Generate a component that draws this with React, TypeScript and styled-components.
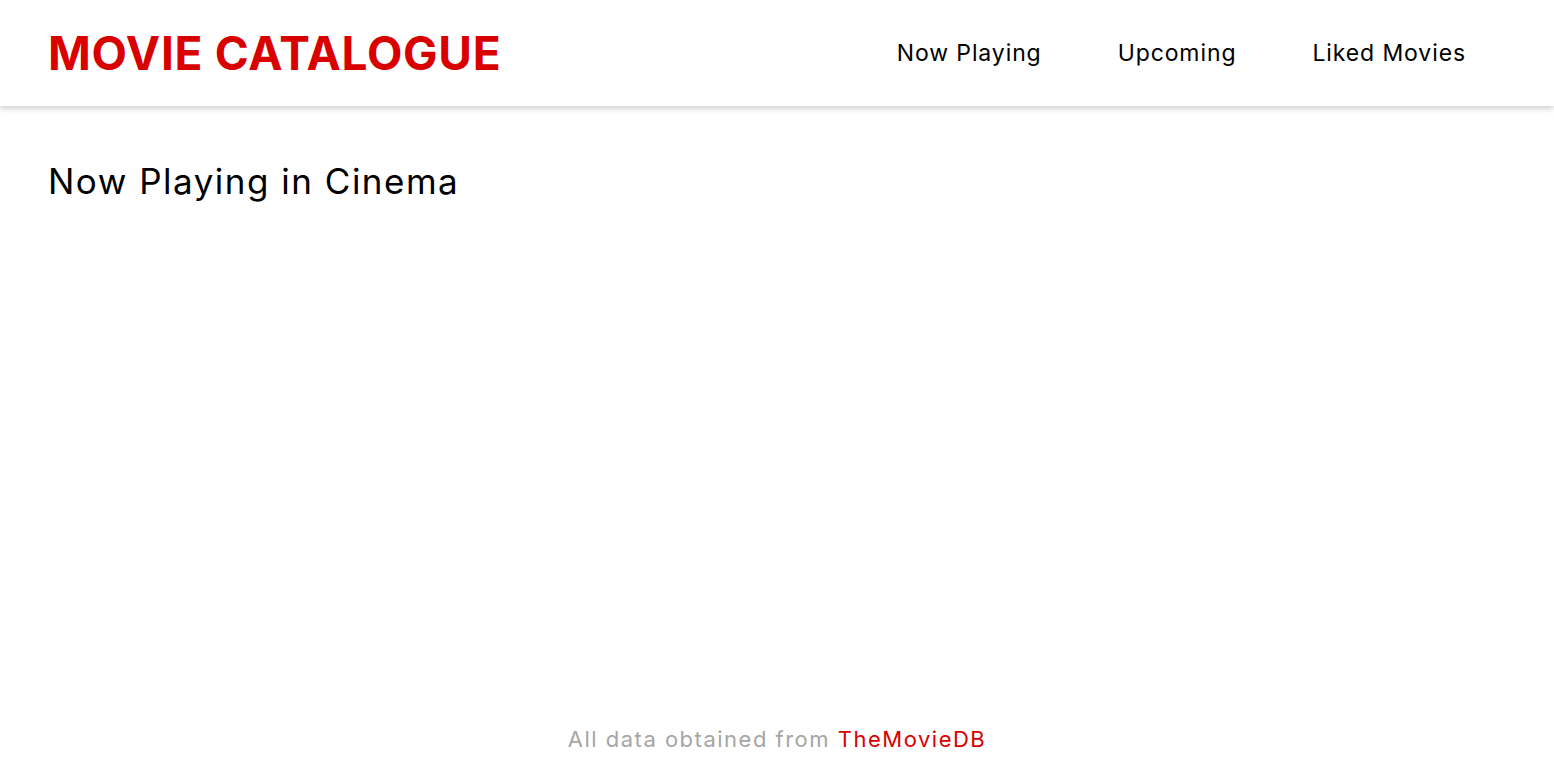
import React from "react";
import styled, { createGlobalStyle } from "styled-components";

const GlobalStyle = createGlobalStyle`
    html, body {
        margin: 0;
        padding: 0;
        background: #fff;
        font-family: "Inter", "Open Sans", sans-serif;
    }
    #root {
        min-height: 100vh;
        display: flex;
        flex-direction: column;
    }
`;

const Header = styled.header`
    height: 106px;
    box-sizing: border-box;
    display: flex;
    align-items: center;
    justify-content: space-between;
    padding: 0 88px 0 48px;
    background: #fff;
    box-shadow: 0 2px 6px rgba(0, 0, 0, 0.22);
`;

const Logo = styled.h1`
    margin: 0;
    font-size: 46px;
    font-weight: 700;
    color: #d90000;
    letter-spacing: 0.7px;
`;

const Nav = styled.nav`
    display: flex;
    gap: 76px;
`;

const NavLink = styled.a`
    font-size: 23px;
    font-weight: 400;
    letter-spacing: 0.9px;
    color: #000;
    text-decoration: none;
    cursor: pointer;
`;

const Main = styled.main`
    flex: 1;
    padding: 0 48px;
`;

const Title = styled.h2`
    margin: 54px 0 0;
    font-size: 35px;
    font-weight: 400;
    letter-spacing: 1.5px;
    color: #000;
`;

const Footer = styled.footer`
    height: 82px;
    display: flex;
    align-items: center;
    justify-content: center;
    font-size: 22px;
    letter-spacing: 1.5px;
    color: #a6a6a6;
`;

const Source = styled.span`
    color: #d90000;
`;

export default function App() {
    return (
        <>
            <GlobalStyle />
            <Header>
                <Logo>MOVIE CATALOGUE</Logo>
                <Nav>
                    <NavLink>Now Playing</NavLink>
                    <NavLink>Upcoming</NavLink>
                    <NavLink>Liked Movies</NavLink>
                </Nav>
            </Header>
            <Main>
                <Title>Now Playing in Cinema</Title>
            </Main>
            <Footer>
                All data obtained from&nbsp;<Source>TheMovieDB</Source>
            </Footer>
        </>
    );
}
